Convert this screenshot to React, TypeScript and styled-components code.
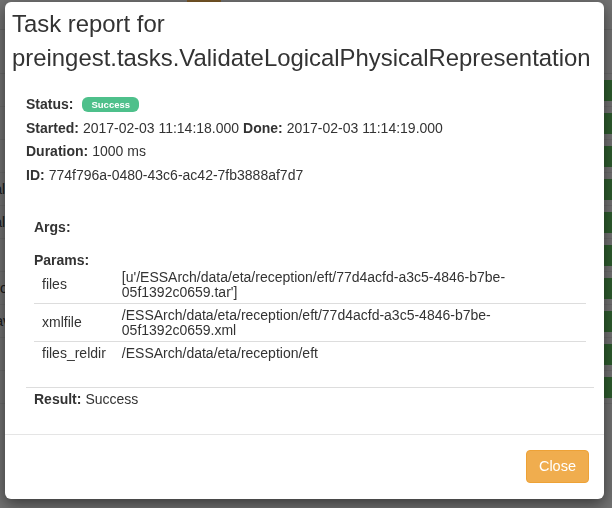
import React from "react";
import styled, { createGlobalStyle } from "styled-components";

const GlobalStyle = createGlobalStyle`
  html, body { margin: 0; padding: 0; }
  body {
    font-family: "Liberation Sans", Arial, Helvetica, sans-serif;
    font-size: 14px;
    color: #333;
    background: #e4e4e4;
    overflow: hidden;
  }
  * { box-sizing: border-box; }
`;

/* ---------- page behind the modal ---------- */
const Page = styled.div`
  width: 612px;
  height: 508px;
  display: flex;
  flex-direction: column;
  background: #e4e4e4;
`;

const TopBar = styled.div`
  height: 30px;
  display: flex;
  padding-left: 187px;
  border-bottom: 1px solid #cfcfcf;
`;

const ActiveTab = styled.div`
  width: 34px;
  height: 3px;
  background: #f0ad4e;
`;

const SubBar = styled.div`
  height: 44px;
  border-bottom: 1px solid #d2d2d2;
`;

const BgRow = styled.div`
  height: 33px;
  display: flex;
  align-items: center;
  border-bottom: 1px solid #d6d6d6;
  font-size: 14px;
  color: #333;
`;

const BgCell = styled.span`
  flex: 1;
  white-space: nowrap;
  overflow: hidden;
  margin-left: -14px;
`;

const GreenCell = styled.div`
  width: 20px;
  height: 21px;
  background: #5cb85c;
`;

/* ---------- overlay + modal ---------- */
const Backdrop = styled.div`
  position: fixed;
  inset: 0;
  background: rgba(0, 0, 0, 0.5);
`;

const Modal = styled.div`
  position: fixed;
  top: 2px;
  left: 5px;
  width: 599px;
  background: #fff;
  border-radius: 6px;
  box-shadow: 0 5px 15px rgba(0, 0, 0, 0.5);
  display: flex;
  flex-direction: column;
`;

const Header = styled.div`
  padding: 5px 8px 0 7px;
`;

const Title = styled.h3`
  margin: 0;
  font-size: 23.9px;
  font-weight: 400;
  line-height: 34px;
  color: #333;
`;

const Body = styled.div`
  padding: 18px 10px 25px 21px;
  display: flex;
  flex-direction: column;
`;

const InfoLine = styled.div`
  line-height: 23.5px;
  font-size: 14px;
  display: flex;
  align-items: center;
  white-space: nowrap;
`;

const Label = styled.b`
  font-weight: 700;
  margin-right: 4px;
`;

const Badge = styled.span`
  display: inline-block;
  margin-left: 5px;
  height: 15px;
  padding: 0 9px;
  border-radius: 6px;
  background: #4ec08b;
  color: #fff;
  font-size: 9.5px;
  font-weight: 700;
  line-height: 15px;
`;

const Section = styled.div<{ $top?: number }>`
  padding: 0 8px;
  margin-top: ${(p) => p.$top ?? 0}px;
`;

const SectionLabel = styled.div<{ $gap?: number }>`
  font-weight: 700;
  line-height: 12px;
  margin-bottom: ${(p) => p.$gap ?? 0}px;
`;

const ParamTable = styled.table`
  width: 100%;
  border-collapse: collapse;
  font-size: 14px;
`;

const Row = styled.tr`
  & + & td {
    border-top: 1px solid #ddd;
  }
`;

const Cell = styled.td`
  padding: 3.5px 8px;
  line-height: 15px;
  vertical-align: middle;
  color: #333;
`;

const Divider = styled.hr`
  margin: 23px 0 0 0;
  border: 0;
  border-top: 1px solid #ddd;
  height: 0;
`;

const ResultLine = styled.div`
  padding: 1px 8px 0;
  line-height: 20px;
`;

const Footer = styled.div`
  border-top: 1px solid #e5e5e5;
  padding: 15px 15px 16px;
  display: flex;
  justify-content: flex-end;
`;

const CloseButton = styled.button`
  font-family: "Liberation Sans", Arial, sans-serif;
  font-size: 14.5px;
  line-height: 19px;
  padding: 6px 12px;
  color: #fff;
  background: #f0ad4e;
  border: 1px solid #eea236;
  border-radius: 4px;
  cursor: pointer;
`;

const params: [string, string][] = [
  ["files", "[u'/ESSArch/data/eta/reception/eft/77d4acfd-a3c5-4846-b7be-05f1392c0659.tar']"],
  ["xmlfile", "/ESSArch/data/eta/reception/eft/77d4acfd-a3c5-4846-b7be-05f1392c0659.xml"],
  ["files_reldir", "/ESSArch/data/eta/reception/eft"],
];

const bgRows = ["", "", "", "Validate", "Validate", "", "Prove", "Save", "", ""];

export default function App() {
  return (
    <>
      <GlobalStyle />
      <Page>
        <TopBar>
          <ActiveTab />
        </TopBar>
        <SubBar />
        {bgRows.map((t, i) => (
          <BgRow key={i}>
            <BgCell>{t}</BgCell>
            <GreenCell />
          </BgRow>
        ))}
      </Page>
      <Backdrop />
      <Modal>
        <Header>
          <Title>
            Task report for
            <br />
            preingest.tasks.ValidateLogicalPhysicalRepresentation
          </Title>
        </Header>
        <Body>
          <InfoLine>
            <Label>Status:</Label>
            <Badge>Success</Badge>
          </InfoLine>
          <InfoLine>
            <Label>Started:</Label>2017-02-03 11:14:18.000&nbsp;<Label>Done:</Label>2017-02-03 11:14:19.000
          </InfoLine>
          <InfoLine>
            <Label>Duration:</Label>1000 ms
          </InfoLine>
          <InfoLine>
            <Label>ID:</Label>774f796a-0480-43c6-ac42-7fb3888af7d7
          </InfoLine>
          <Section $top={34}>
            <SectionLabel $gap={21}>Args:</SectionLabel>
            <SectionLabel>Params:</SectionLabel>
            <ParamTable>
              <tbody>
                {params.map(([k, v]) => (
                  <Row key={k}>
                    <Cell>{k}</Cell>
                    <Cell>{v}</Cell>
                  </Row>
                ))}
              </tbody>
            </ParamTable>
          </Section>
          <Divider />
          <ResultLine>
            <Label>Result:</Label>Success
          </ResultLine>
        </Body>
        <Footer>
          <CloseButton>Close</CloseButton>
        </Footer>
      </Modal>
    </>
  );
}
